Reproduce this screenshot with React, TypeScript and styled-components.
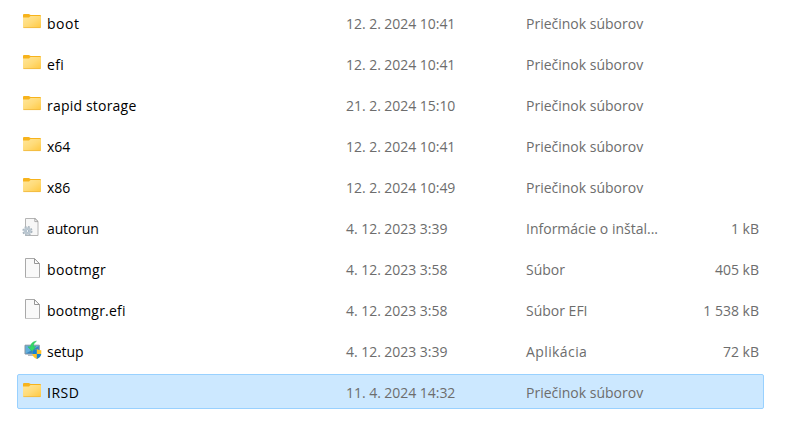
import React from 'react';
import styled, { createGlobalStyle } from 'styled-components';

const Global = createGlobalStyle`
  body { margin: 0; background: #fff; font-family: "Open Sans", "Noto Sans", sans-serif; }
`;

const List = styled.main`
  display: flex;
  flex-direction: column;
  gap: 6px;
  width: 747px;
  height: 421px;
  box-sizing: border-box;
  padding-top: 5px;
  margin-left: 17px;
`;

const Row = styled.div<{ $selected?: boolean }>`
  display: grid;
  grid-template-columns: 29px 299px 180px 150px 83px;
  align-items: start;
  flex: none;
  box-sizing: border-box;
  height: 35px;
  border: 1px solid ${(p) => (p.$selected ? '#99d1ff' : 'transparent')};
  background: ${(p) => (p.$selected ? '#cce8ff' : 'transparent')};
  border-radius: 2px;
`;

const Cell = styled.span<{ $right?: boolean; $spacing?: number }>`
  padding-top: 8px;
  font-size: 14px;
  line-height: 20px;
  letter-spacing: ${(p) => p.$spacing ?? 0}px;
  white-space: pre;
  color: #6d6d6d;
  text-align: ${(p) => (p.$right ? 'right' : 'left')};
`;

const Name = styled(Cell)`
  color: #000;
`;

const Icon = styled.svg`
  display: block;
  width: 20px;
  height: 20px;
  margin: 6px 0 0 4px;
`;

type Kind = 'folder' | 'file' | 'config' | 'setup';

const FolderIcon = () => (
  <Icon viewBox="0 0 20 20">
    <defs>
      <linearGradient id="folder" x1="0" y1="0" x2="1" y2="1">
        <stop offset="0" stopColor="#ffe69a" />
        <stop offset="0.5" stopColor="#ffdb78" />
        <stop offset="1" stopColor="#ffc840" />
      </linearGradient>
    </defs>
    <path d="M1 3Q1 2 2 2H6.6Q7.3 2 7.8 2.5L8.6 3H18Q19 3 19 4V9H1Z" fill="#f7b31c" />
    <path d="M1 5.5H7L8.5 4H18.2Q19 4 19 4.8V15Q19 16 18 16H2Q1 16 1 15Z" fill="url(#folder)" />
    <path d="M1.4 15.6H18.6" stroke="#efb63c" strokeWidth="0.8" />
  </Icon>
);

const FileIcon = () => (
  <Icon viewBox="0 0 20 20">
    <path d="M3.5 0.5H12.5L17.5 5.5V19.5H3.5Z" fill="#f9f9f9" stroke="#a9a9a9" />
    <path d="M3 19.5H18" stroke="#c6c6c6" />
    <path d="M12.5 0.7V5.5H17.3Z" fill="#fff" stroke="#969696" strokeLinejoin="round" />
  </Icon>
);

const ConfigIcon = () => (
  <Icon viewBox="0 0 20 20">
    <path d="M3.5 1.5H13.2L16 4.3V18.5H3.5Z" fill="#f7f7f7" stroke="#b4b4b4" />
    <path d="M12.8 1.5V4.6H16Z" fill="#fff" stroke="#999" strokeWidth="0.8" />
    <circle cx="5.4" cy="14" r="4.2" fill="none" stroke="#a9b5be" strokeWidth="1.8" strokeDasharray="1.9 1.4" />
    <circle cx="5.4" cy="14" r="2.8" fill="#eff3f5" stroke="#bcc8d1" strokeWidth="2" />
    <circle cx="5.4" cy="14" r="1.4" fill="#f9fbfc" stroke="#8299ad" strokeWidth="0.7" />
  </Icon>
);

const SetupIcon = () => (
  <Icon viewBox="0 0 20 20">
    <path d="M3 5.2H17.3V14H3Z" fill="#62aedb" stroke="#8794a0" />
    <path d="M4 13.4L16.8 6V13.4Z" fill="#3c83bc" />
    <path d="M6 15.2H13" stroke="#a0abb3" strokeWidth="1.2" />
    <path d="M14.4 1.2C10.8 1.4 8.7 3.7 8.5 7L6 6.8L10.3 11.8L13.6 6.5L11.3 6.8C11.2 4.4 12.2 2.6 14.4 1.2Z" fill="#34d965" stroke="#24bd55" strokeWidth="0.5" />
    <path d="M14.8 8.9Q16.7 10 19.3 10.2V13.4Q19 17 14.8 19Q10.5 17 10.3 13.4V10.2Q13 10 14.8 8.9Z" fill="#ffc329" />
    <path d="M14.8 8.9V13.9H10.3V10.2Q13 10 14.8 8.9ZM14.8 13.9H19.3Q18.7 17.1 14.8 19Z" fill="#1783d5" />
  </Icon>
);

const icons: Record<Kind, React.FC> = {
  folder: FolderIcon,
  file: FileIcon,
  config: ConfigIcon,
  setup: SetupIcon,
};

interface Entry {
  kind: Kind;
  name: string;
  date: string;
  type: string;
  size?: string;
  nameSpacing?: number;
  typeSpacing?: number;
}

const rows: Entry[] = [
  { kind: 'folder', name: 'boot', date: '12. 2. 2024 10:41', type: 'Priečinok súborov', nameSpacing: 0.5 },
  { kind: 'folder', name: 'efi', date: '12. 2. 2024 10:41', type: 'Priečinok súborov', nameSpacing: 0.3 },
  { kind: 'folder', name: 'rapid storage', date: '21. 2. 2024 15:10', type: 'Priečinok súborov', nameSpacing: 0.2 },
  { kind: 'folder', name: 'x64', date: '12. 2. 2024 10:41', type: 'Priečinok súborov' },
  { kind: 'folder', name: 'x86', date: '12. 2. 2024 10:49', type: 'Priečinok súborov' },
  { kind: 'config', name: 'autorun', date: '4. 12. 2023 3:39', type: 'Informácie o inštal...', size: '1 kB', nameSpacing: -0.15 },
  { kind: 'file', name: 'bootmgr', date: '4. 12. 2023 3:58', type: 'Súbor', size: '405 kB', nameSpacing: 0.35 },
  { kind: 'file', name: 'bootmgr.efi', date: '4. 12. 2023 3:58', type: 'Súbor EFI', size: '1 538 kB', nameSpacing: 0.2 },
  { kind: 'setup', name: 'setup', date: '4. 12. 2023 3:39', type: 'Aplikácia', size: '72 kB', typeSpacing: 0.4 },
  { kind: 'folder', name: 'IRSD', date: '11. 4. 2024 14:32', type: 'Priečinok súborov', nameSpacing: 0.5 },
];

export default function App() {
  return (
    <>
      <Global />
      <List>
        {rows.map((row) => {
          const KindIcon = icons[row.kind];
          return (
            <Row key={row.name} $selected={row.name === 'IRSD'}>
              <KindIcon />
              <Name $spacing={row.nameSpacing}>{row.name}</Name>
              <Cell $spacing={-0.04}>{row.date}</Cell>
              <Cell $spacing={row.typeSpacing}>{row.type}</Cell>
              <Cell $right>{row.size}</Cell>
            </Row>
          );
        })}
      </List>
    </>
  );
}
